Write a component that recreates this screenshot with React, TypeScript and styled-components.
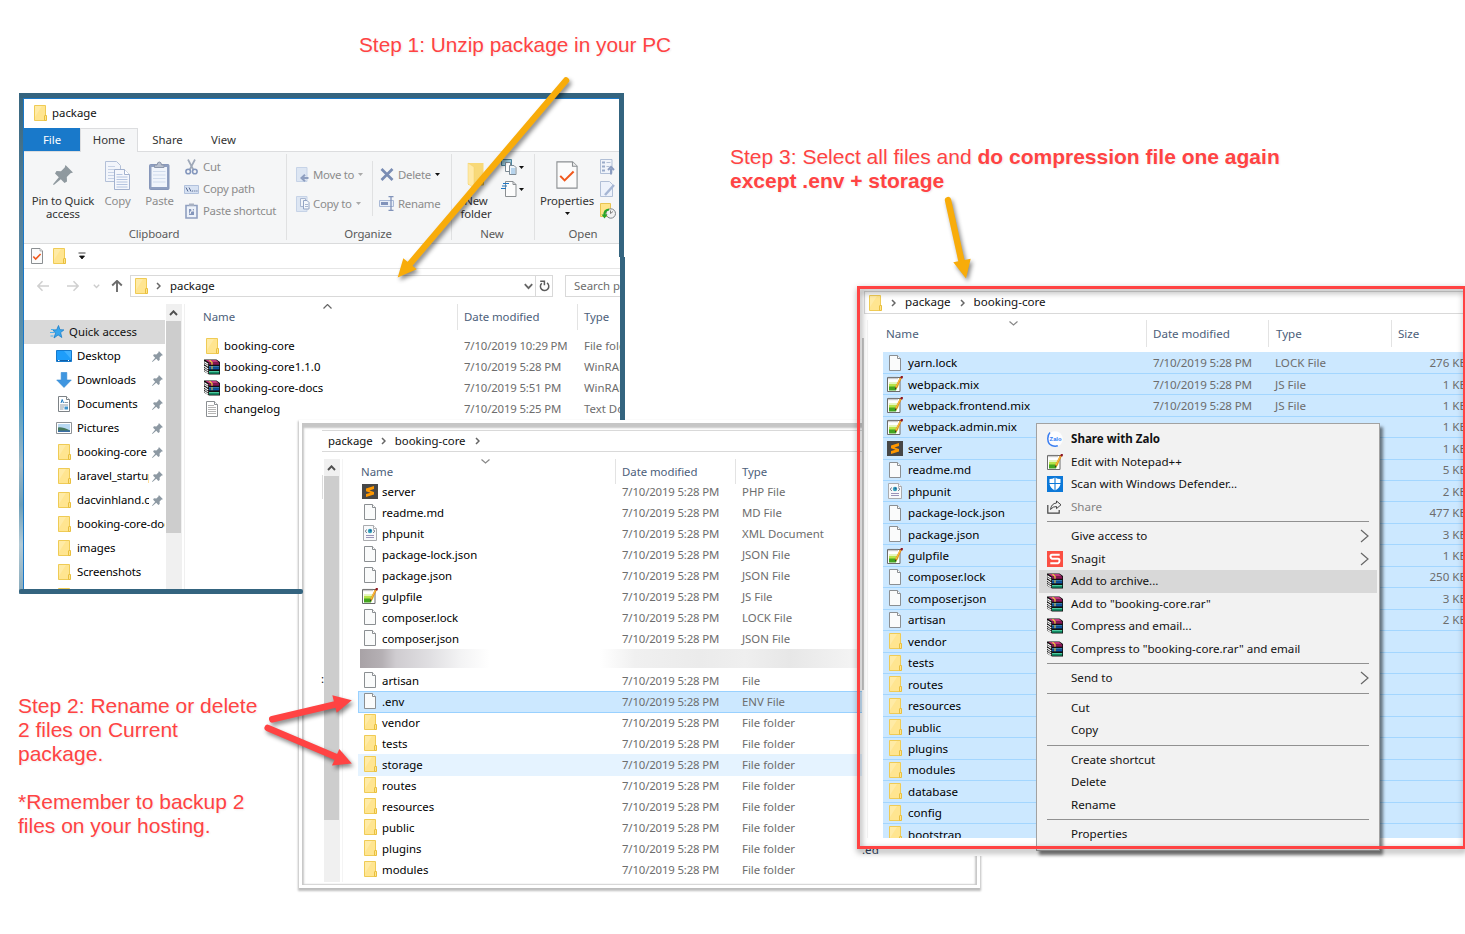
import React from "react";
import styled, { createGlobalStyle, css } from "styled-components";

const GlobalStyle = createGlobalStyle`
  * { box-sizing: border-box; }
  html, body { margin: 0; padding: 0; background: #fff; }
  body { overflow: hidden; }
  svg { display: block; flex: none; }
`;

const Desktop = styled.div`
  position: relative;
  width: 1465px;
  height: 934px;
  overflow: hidden;
  background: #fff;
  font-family: "Noto Sans", "Open Sans", sans-serif;
  font-size: 11.4px;
  color: #111;
  white-space: nowrap;
`;

/* ---------- annotations ---------- */

const Note = styled.div<{ $x: number; $y: number; $w: number; $size?: number }>`
  position: absolute;
  left: ${(p) => p.$x}px;
  top: ${(p) => p.$y}px;
  width: ${(p) => p.$w}px;
  font-family: "Liberation Sans", Arial, sans-serif;
  font-size: ${(p) => p.$size ?? 21}px;
  line-height: 24px;
  color: #ff4343;
  text-shadow: 1px 1px 2px rgba(0, 0, 0, 0.08);
  p { margin: 0 0 24px; }
`;

const ArrowLayer = styled.svg`
  position: absolute;
  left: 0;
  top: 0;
  pointer-events: none;
  filter: drop-shadow(2px 3px 2px rgba(0, 0, 0, 0.45));
`;

/* ---------- icons ---------- */

const Folder = () => (
  <svg width="14" height="16" viewBox="-1 0 14 16">
    <path d="M.5.5h11v15H.5z" fill="#ffe590" stroke="#efcb55" />
    <path d="M1 1h7L1 12z" fill="#ffefb5" opacity=".6" />
    <path d="M10.500 15.500v-4.500q0-.5.5-.5h1.500v5z" fill="#ffe58c" stroke="#e9bf3e" />
  </svg>
);

const Page = () => (
  <svg width="12" height="16" viewBox="0 0 12 16">
    <path d="M.5.5h8l3 3v12H.5z" fill="#fafbfb" stroke="#8b8f92" />
    <path d="M8.500.5v3h3" fill="#fff" stroke="#8b8f92" />
  </svg>
);

const TextPage = () => (
  <svg width="12" height="16" viewBox="0 0 12 16">
    <path d="M.5.5h8l3 3v12H.5z" fill="#fff" stroke="#8b8f92" />
    <path d="M2 4.500h6M2 6.500h8M2 8.500h8M2 10.500h8M2 12.500h8" stroke="#b5b5b5" />
    <path d="M8.500.5v3h3" fill="#fff" stroke="#8b8f92" />
  </svg>
);

const CheckPage = ({ w = 12, h = 16 }: { w?: number; h?: number }) => (
  <svg width={w} height={h} viewBox="0 0 12 16" preserveAspectRatio="none">
    <path d="M.5.5h8.500l2.500 2.500v12.500H.5z" fill="#fbfbfb" stroke="#8b8f92" strokeWidth={w > 15 ? 0.6 : 1} />
    <path d="M9 .5v2.500h2.500" fill="#eee" stroke="#8b8f92" strokeWidth=".6" />
    <path d="M2.300 8.500l2.400 2.600L9.600 6" fill="none" stroke="#f0581c" strokeWidth={w > 15 ? 1.1 : 1.6} />
  </svg>
);

const Xml = () => (
  <svg width="14" height="16" viewBox="0 0 14 16">
    <path d="M.5.5h10l3 3v12H.5z" fill="#f8f9fb" stroke="#a9abae" />
    <path d="M10.500.5v3h3" fill="#fff" stroke="#a9abae" />
    <path d="M4 4.500l-2 1.700 2 1.700M10 4.500l2 1.700-2 1.700" fill="none" stroke="#7c8290" />
    <circle cx="7" cy="6" r="2.200" fill="#3aa5bd" />
    <circle cx="7.500" cy="5.600" r="1" fill="#1f5f9a" />
    <path d="M3 10.500h8M3 12.500h8" stroke="#9a93b8" />
  </svg>
);

const Sublime = () => (
  <svg width="16" height="15" viewBox="0 0 16 15">
    <path d="M0 0h16v15H0z" fill="#474747" />
    <path d="M4 4.500L12 2v3L7.500 6.400 12 8v2.600L4 13v-2.900l4.500-1.400L4 7.200z" fill="#ff9800" />
  </svg>
);

const Notepad = () => (
  <svg width="16" height="16" viewBox="0 0 16 16">
    <path d="M.5 1.500h12.500v14H.5z" fill="#fff" stroke="#6b6b6b" />
    <path d="M2 7h9.500v3L9 14H2z" fill="#b7e34a" />
    <path d="M2 10.500h8l-1 4H2z" fill="#43a51f" />
    <path d="M2 6h9v2H2z" fill="#e6f6bd" />
    <path d="M2 .8v2.400M4 .8v2.400M6 .8v2.400M8 .8v2.400M10 .8v2.400" stroke="#8a8a8a" strokeWidth=".9" />
    <path d="M14 1.500L8.800 12" stroke="#e48a17" strokeWidth="2" />
    <path d="M13.400 2.300L9 11" stroke="#ffd34d" strokeWidth=".8" />
    <path d="M15.300 0l-1.200 2.200" stroke="#8c1822" strokeWidth="2.400" />
    <path d="M8.800 11.500l-.5 1.700" stroke="#333" strokeWidth="1" />
  </svg>
);

const Rar = () => (
  <svg width="16" height="16" viewBox="0 0 16 16">
    <path d="M0 .5h12.500L16 3v12.500H5L0 12.500z" fill="#101010" />
    <path d="M1.500 1h10.700L15 3.500H5z" fill="#c2387c" />
    <path d="M5 3.500h10.200V5.700H5z" fill="#8a1456" />
    <path d="M5 7.200h10.200v1.200H5z" fill="#3f95d6" />
    <path d="M5 8.400h10.200v2H5z" fill="#0d55a6" />
    <path d="M5 12h10.200v1H5z" fill="#4fcaa0" />
    <path d="M5 13h10.200v1.700H5z" fill="#138e66" />
    <path d="M.3 2.800L4.200 5.300M.3 4.600l3.900 2.600M.3 7.200l3.900 2.800M.3 9.400l3.900 2.700M.3 11.500l3.900 2.800" stroke="#fff" strokeWidth="1.100" />
    <path d="M5.500 1.200L8 3.400v2.300" fill="none" stroke="#f2d33c" strokeWidth="1.200" />
    <path d="M8 7.200v3" stroke="#f2d33c" strokeWidth="1" />
  </svg>
);

const PinShape = ({ size = 11, color = "#8d99a3" }: { size?: number; color?: string }) => (
  <svg width={size} height={size} viewBox="0 0 20 20">
    <path d="M12.500 0L20 7.500l-2.500.8-3.700 3.700.2 4.500L11.500 18 7.800 14.200.8 20 0 19.200l5.800-7L2 8.500 3.500 6l4.500.2 3.700-3.700z" fill={color} />
  </svg>
);

const Star = () => (
  <svg width="14" height="14" viewBox="0 0 14 14">
    <path d="M8.500.5l1.400 4.200 4 .2-3.300 2.700 1.200 4.900-3.700-2.600L4 13l1.500-4.700L3 5l3.700-.2z" fill="#38a6ec" stroke="#1d7fc9" strokeWidth=".8" />
    <path d="M1 4.500h3M0 7.500h4M.5 11h3" stroke="#4ab0ee" strokeWidth="1" />
  </svg>
);

const Monitor = () => (
  <svg width="16" height="12" viewBox="0 0 16 12">
    <path d="M.5.5h15v11H.5z" fill="#1e9dfa" stroke="#1579cc" />
    <path d="M8 1h7v8z" fill="#3fb0ff" />
    <path d="M1 10.500h14" stroke="#0f5fa8" />
    <path d="M2 10.500h1.500M12 10.500h1" stroke="#fff" />
  </svg>
);

const DownArrow = () => (
  <svg width="16" height="16" viewBox="0 0 16 16">
    <path d="M5.200.5h5.600V8h4.500L8 15.500.7 8h4.500z" fill="#3f96e0" stroke="#2f86d1" strokeWidth=".6" />
  </svg>
);

const DocIcon = () => (
  <svg width="12" height="16" viewBox="0 0 12 16">
    <path d="M.5.5h8l3 3v12H.5z" fill="#fff" stroke="#7d8286" />
    <path d="M8.500.5v3h3" fill="#fff" stroke="#7d8286" />
    <path d="M3 7l1.200-3.500L5.500 7" fill="none" stroke="#1c7bc4" />
    <path d="M6.500 6.500H10M2 9h8M2 13h3.500" stroke="#8c9aa6" />
    <path d="M2 11h4" stroke="#8c9aa6" />
    <path d="M6.500 10.500H10v3H6.500z" fill="#3d93cc" />
  </svg>
);

const PictureIcon = () => (
  <svg width="16" height="12" viewBox="0 0 16 12">
    <path d="M.5.5h15v11H.5z" fill="#fff" stroke="#8e9296" />
    <path d="M2 2h12v8H2z" fill="#b9d9f2" />
    <path d="M2 5.500q4-1 12 3V10H2z" fill="#47795c" />
    <path d="M2 8.500h12V10H2z" fill="#3a6ea5" />
  </svg>
);

const Chevron = ({ d, w, h, c = "#6a6a6a", s = 1.200 }: { d: string; w: number; h: number; c?: string; s?: number }) => (
  <svg width={w} height={h} viewBox={`0 0 ${w} ${h}`}>
    <path d={d} fill="none" stroke={c} strokeWidth={s} />
  </svg>
);

const Crumb = () => <Chevron w={5} h={8} d="M1 1l3 3-3 3" c="#666" s={1.500} />;
const SortDown = () => <Chevron w={9} h={5} d="M.5.5l4 3.500 4-3.500" c="#888" />;
const SortUp = () => <Chevron w={9} h={5} d="M.5 4.500l4-4 4 4" c="#666" />;
const ScrollUp = () => <Chevron w={9} h={6} d="M1 5l3.500-3.700L8 5" c="#505050" s={1.900} />;

const Caret = ({ c = "#111" }: { c?: string }) => (
  <svg width="5" height="3" viewBox="0 0 5 3"><path d="M0 0h5L2.500 3z" fill={c} /></svg>
);

const CopyBig = () => (
  <svg width="25" height="29" viewBox="0 0 25 29">
    <path d="M.5.5h11l4 4v16H.5z" fill="#f2f5fb" stroke="#b3c0d8" />
    <path d="M3 5.500h7M3 8.500h10M3 11.500h10M3 14.500h10M3 17.500h10" stroke="#c7d2e6" />
    <path d="M9.500 8.500h10l5 5v15h-15z" fill="#f5f7fc" stroke="#a3b2cf" />
    <path d="M19.500 8.500v5h5" fill="#fff" stroke="#a3b2cf" />
    <path d="M11.500 13.500h6M11.500 16h11M11.500 18.500h11M11.500 21h11M11.500 23.500h11M11.500 26h11" stroke="#b4c4e0" />
  </svg>
);

const PasteBig = () => (
  <svg width="21" height="29" viewBox="0 0 21 29">
    <rect x=".5" y="3.500" width="19.500" height="25" rx="1" fill="#8f9fc0" stroke="#8797ba" />
    <path d="M2.500 6h15.500v20H2.500z" fill="#f0f4fb" />
    <path d="M4 10.500h12.500M4 14h12.500M4 17.500h12.500M4 21h12.500" stroke="#d0dbec" />
    <path d="M5.500 6.500V4H8q.3-3 2.300-3t2.300 3H15v2.500z" fill="#b7bfce" stroke="#8d97ac" />
  </svg>
);

const Scissors = () => (
  <svg width="13" height="16" viewBox="0 0 13 16">
    <path d="M3 .5L8.500 11M10 .5L4.500 11" stroke="#9fa9b9" strokeWidth="1.700" />
    <circle cx="3.200" cy="12.500" r="2.300" fill="none" stroke="#8497bd" strokeWidth="1.600" />
    <circle cx="9.800" cy="12.500" r="2.300" fill="none" stroke="#8497bd" strokeWidth="1.600" />
  </svg>
);

const PathIcon = () => (
  <svg width="15" height="9" viewBox="0 0 15 9">
    <path d="M.5.5h14v8H.5z" fill="#d7e2f3" stroke="#b1c1dc" />
    <path d="M2 2.500l2 4M5 2.500l2 4" stroke="#586b93" />
    <path d="M8 6h1.200M10.200 6h1.200M12.300 6h1.200" stroke="#586b93" />
  </svg>
);

const PasteShortcut = () => (
  <svg width="13" height="16" viewBox="0 0 13 16">
    <path d="M1 2.500h11v12.500H1z" fill="#edf2fa" stroke="#8f9fc0" strokeWidth="1.600" />
    <path d="M4 .5h5v2.500H4z" fill="#a8b1c2" />
    <path d="M4 6h5v6H4z" fill="#8496bb" />
    <path d="M5 11q0-3 2.500-3.500M6 6.800h2v2" fill="none" stroke="#fff" />
  </svg>
);

const MoveIcon = () => (
  <svg width="13" height="15" viewBox="0 0 13 15">
    <path d="M.5.5H11v14H.5z" fill="#dde6f3" stroke="#c6d3e7" />
    <path d="M12.500 11H7M9 7.800L5.500 11 9 14.200" fill="none" stroke="#8f9fc0" strokeWidth="2" />
  </svg>
);

const CopyToIcon = () => (
  <svg width="14" height="16" viewBox="0 0 14 16">
    <path d="M.5.5H11v15H.5z" fill="#dde6f3" stroke="#c6d3e7" />
    <path d="M4.500 2.500h5v8h-5z" fill="#f2f5fa" stroke="#a9b7d1" />
    <path d="M7.500 4.500h3.500l2 2v6.500H7.500z" fill="#f5f8fc" stroke="#93a4c4" />
    <path d="M9 8.500h3M9 10.500h3" stroke="#a9b7d1" />
  </svg>
);

const DeleteIcon = () => (
  <svg width="14" height="13" viewBox="0 0 14 13">
    <path d="M1.500 1l11 11M12.500 1l-11 11" stroke="#7a8db4" strokeWidth="2.700" />
  </svg>
);

const RenameIcon = () => (
  <svg width="16" height="15" viewBox="0 0 16 15">
    <path d="M.5 4.500h14v6H.5z" fill="#e9eff8" stroke="#a9b9d6" />
    <path d="M2 6h7v3H2z" fill="#8193ba" />
    <path d="M12 1v13M9.500.7h5M9.500 14.300h5" stroke="#8193ba" strokeWidth="1.300" />
  </svg>
);

const NewFolderIcon = () => (
  <svg width="18" height="27" viewBox="0 0 18 27">
    <path d="M1 1h15.500v22H1z" fill="#f8d978" />
    <path d="M1 1l6 4v21l-6-4z" fill="#ffe9a6" stroke="#f3d06a" strokeWidth=".5" />
    <path d="M16.500 14v9H14" fill="none" stroke="#e9bf3e" />
  </svg>
);

const NewItemIcon = () => (
  <svg width="16" height="16" viewBox="0 0 16 16">
    <path d="M.5.5h10v6H.5z" fill="#9ed0e4" stroke="#4d86a0" />
    <path d="M4.500 3.500h5v9h-5z" fill="#fff" stroke="#7d8a94" />
    <path d="M8.500 6.500h4.500l2 2v7H8.500z" fill="#eef5fb" stroke="#7d8a94" />
    <path d="M10 10h4M10 12h4M10 14h4" stroke="#7fb1dd" />
  </svg>
);

const EasyAccess = () => (
  <svg width="16" height="16" viewBox="0 0 16 16">
    <path d="M4.500.5H12l3 3v12H4.500z" fill="#fcfcfc" stroke="#8b8f92" />
    <path d="M12 .5v3h3" fill="none" stroke="#8b8f92" />
    <path d="M2 2.500h6M1 5h5M0 7.500h5" stroke="#1f76c2" strokeWidth="1.200" />
  </svg>
);

const OpenIcon = () => (
  <svg width="15" height="16" viewBox="0 0 15 16">
    <path d="M.5.5h11.500v14H.5z" fill="#f0f4fa" stroke="#b1bfd6" />
    <path d="M2 2.500h3v2H2zM2 6.500h3v2H2zM2 10.500h3v2H2z" fill="#9aabc9" />
    <path d="M6.500 3.500h4M6.500 7.500h3" stroke="#b1bfd6" />
    <path d="M11 15.500V10M8 11l3-3 3 3" fill="none" stroke="#8b9cc0" strokeWidth="2" />
  </svg>
);

const EditIcon = () => (
  <svg width="15" height="16" viewBox="0 0 15 16">
    <path d="M.5.5h9l3 3v12H.5z" fill="#edf2fb" stroke="#b1bfd6" />
    <path d="M14 4L5 14" stroke="#a6b6d4" strokeWidth="2.500" />
  </svg>
);

const HistoryIcon = () => (
  <svg width="16" height="16" viewBox="0 0 16 16">
    <path d="M.5.5h10v13H.5z" fill="#ffe48a" stroke="#e8c451" />
    <circle cx="10.800" cy="10.500" r="4.700" fill="#f1f1f1" stroke="#7d8388" />
    <path d="M10.500 7.500v3l2.500-2" fill="none" stroke="#666" strokeWidth=".8" />
    <path d="M9 6.500q-5 .5-4.500 6" fill="none" stroke="#28a52b" strokeWidth="2.200" />
    <path d="M1.500 11.500h6l-3 4z" fill="#28a52b" />
  </svg>
);

const Refresh = () => (
  <svg width="11" height="12" viewBox="0 0 11 12">
    <path d="M2.800 3.200A4.200 4.200 0 1 0 8 2.900" fill="none" stroke="#5c5c5c" strokeWidth="1.500" />
    <path d="M1.200 1.200h4.200v4" fill="none" stroke="#5c5c5c" strokeWidth="1.500" />
  </svg>
);

const NavArrow = ({ flip, c, up }: { flip?: boolean; c: string; up?: boolean }) => (
  <svg width="12" height="12" viewBox="0 0 12 12">
    <path
      transform={up ? "rotate(90 6 6)" : flip ? "rotate(180 6 6)" : undefined}
      d="M12 6H1M5.500 1.200L.9 6l4.600 4.800"
      fill="none" stroke={c} strokeWidth={up ? 1.900 : 1.500}
    />
  </svg>
);

const Zalo = () => (
  <svg width="16" height="16" viewBox="0 0 16 16">
    <circle cx="8" cy="8" r="7.800" fill="#fdfdff" />
    <path d="M3 1.500Q.6 4 .8 8q.2 5 4 6.500 3 1.200 6 .3" fill="none" stroke="#3a7ef0" strokeWidth="1.500" />
    <text x="2.600" y="9.800" fontFamily="Liberation Sans" fontWeight="bold" fontSize="5.800" fill="#2f7bf5">Zalo</text>
  </svg>
);

const Defender = () => (
  <svg width="16" height="16" viewBox="0 0 16 16">
    <path d="M0 0h16v16H0z" fill="#0c78d8" />
    <path d="M8 1.500q2.500 1.500 5.500 1.500v5q-.8 4-5.500 6.500Q3.300 12 2.500 8V3Q5.500 3 8 1.500z" fill="#fff" />
    <path d="M8 1v14M2 7.500h12" stroke="#0c78d8" strokeWidth="1.100" />
  </svg>
);

const ShareIcon = () => (
  <svg width="15" height="14" viewBox="0 0 15 14">
    <path d="M.8 5v8.200h11.400V10" fill="none" stroke="#444" strokeWidth="1.200" />
    <path d="M9.500 1l4.500 3.800-4.500 3.800V6.500Q6 6.300 3.500 9.500 4.300 3.500 9.500 3z" fill="none" stroke="#444" />
  </svg>
);

const Snagit = () => (
  <svg width="16" height="16" viewBox="0 0 16 16">
    <path d="M0 0h16v16H0z" fill="#fb4f43" />
    <path d="M12.700 3.800H5Q3.500 3.800 3.500 5.500T5 7.800h6q1.500 0 1.500 2t-1.500 2.400H3.300" fill="none" stroke="#fff" strokeWidth="2" />
  </svg>
);

/* ---------- shared explorer parts ---------- */

const IconSlot = styled.span<{ $w: number }>`
  display: flex;
  flex: none;
  justify-content: center;
  align-items: center;
  width: ${(p) => p.$w}px;
`;

/* Text that sits one pixel above the middle of its icon */
const Raised = styled.span`
  flex: none;
  margin-top: -2px;
`;

const ScrollBar = styled.div`
  display: flex;
  flex-direction: column;
  flex: none;
  width: 16px;
  background: #f0f0f0;
`;

const ScrollButton = styled.div`
  display: flex;
  justify-content: center;
  align-items: center;
  width: 15px;
  height: 17px;
`;

const ScrollThumb = styled.div<{ $h: number }>`
  height: ${(p) => p.$h}px;
  width: 15px;
  background: #cdcdcd;
`;

const HeaderRow = styled.div<{ $h: number }>`
  display: flex;
  position: relative;
  height: ${(p) => p.$h}px;
  line-height: ${(p) => p.$h}px;
  color: #4c607a;
`;

const HeaderCell = styled.div<{ $w: number; $pad: number; $line?: boolean }>`
  flex: none;
  width: ${(p) => p.$w}px;
  padding-left: ${(p) => p.$pad}px;
  ${(p) => p.$line && css`border-left: 1px solid #e3e3e3; letter-spacing: -0.04px;`}
`;

const SortMark = styled.div<{ $x: number; $y: number }>`
  position: absolute;
  left: ${(p) => p.$x}px;
  top: ${(p) => p.$y}px;
`;

const Cell = styled.span<{ $w?: number; $kind?: "name" | "date" | "type" | "size" }>`
  flex: none;
  width: ${(p) => (p.$w ? `${p.$w}px` : "auto")};
  color: ${(p) => (p.$kind ? "#6d6d6d" : "#000")};
  letter-spacing: ${(p) => (p.$kind === "date" ? "-0.16px" : "0")};
  text-align: ${(p) => (p.$kind === "size" ? "right" : "left")};
`;

/* ---------- window 1 ---------- */

const PackageWindow = styled.section`
  position: absolute;
  left: 19px;
  top: 93px;
  width: 601px;
  height: 501px;
  display: flex;
  flex-direction: column;
  background: #fff;
  border-top: 5px solid #34647f;
  overflow: hidden;
`;

const WindowMiddle = styled.div`
  display: flex;
  flex: 1;
  min-height: 0;
`;

const Wallpaper = styled.div`
  flex: none;
  width: 5px;
  border-right: 1px solid #1a78c8;
  background: linear-gradient(#39677f 0, #55809a 24%, #5b91ad 48%, #4f9cc0 60%, #9fb9c6 74%, #6fa0b8 82%, #b4cbd6 90%, #86a9ba 100%);
`;

const WindowBody = styled.div`
  display: flex;
  flex-direction: column;
  flex: 1;
  min-width: 0;
  border-top: 1px solid #1a78c8;
`;

const TitleBar = styled.header`
  display: flex;
  align-items: center;
  gap: 5px;
  height: 29px;
  padding: 0 0 2px 9px;
`;

const TabStrip = styled.nav`
  display: flex;
  height: 24px;
  line-height: 23px;
  text-align: center;
  border-bottom: 1px solid #dcdddf;
`;

const Tab = styled.div<{ $w: number; $kind?: "file" | "active" }>`
  width: ${(p) => p.$w}px;
  height: 24px;
  color: #333;
  ${(p) => p.$kind === "file" && css`background: #1979ca; color: #fff; height: 23px;`}
  ${(p) => p.$kind === "active" && css`
    background: #f5f6f7;
    border: 1px solid #dcdddf;
    border-bottom: none;
    line-height: 22px;
  `}
`;

const Ribbon = styled.div`
  display: flex;
  flex: none;
  height: 92px;
  background: #f5f6f7;
  border-bottom: 1px solid #dadbdc;
  letter-spacing: -0.13px;
`;

const RibbonGroup = styled.div<{ $w: number }>`
  display: flex;
  flex-direction: column;
  flex: none;
  position: relative;
  width: ${(p) => p.$w}px;
  &:not(:last-child)::after {
    content: "";
    position: absolute;
    right: 0;
    top: 2px;
    height: 86px;
    border-right: 1px solid #e0e1e2;
  }
`;

const GroupBody = styled.div`
  display: flex;
  height: 75px;
`;

const GroupLabel = styled.div`
  padding-right: 3px;
  text-align: center;
  line-height: 14px;
  color: #5a5a5a;
`;

const BigButton = styled.div<{ $w: number; $ml?: number; $off?: boolean }>`
  display: flex;
  flex-direction: column;
  flex: none;
  align-items: center;
  width: ${(p) => p.$w}px;
  margin-left: ${(p) => p.$ml ?? 0}px;
  padding-top: 8px;
  line-height: 13px;
  text-align: center;
  color: ${(p) => (p.$off ? "#8c8c8c" : "#333")};
`;

const BigIcon = styled.div`
  display: flex;
  align-items: center;
  height: 30px;
  margin-bottom: 4px;
`;

const SmallColumn = styled.div<{ $w: number; $top: number; $left: number; $line?: boolean }>`
  flex: none;
  width: ${(p) => p.$w}px;
  padding-top: ${(p) => p.$top}px;
  padding-left: ${(p) => p.$left}px;
  position: relative;
  ${(p) => p.$line && css`
    &::after {
      content: "";
      position: absolute;
      right: 0;
      top: 9px;
      height: 55px;
      border-right: 1px solid #e0e1e2;
    }
  `}
`;

const SmallItem = styled.div<{ $h?: number; $gap?: number }>`
  display: flex;
  align-items: center;
  gap: ${(p) => p.$gap ?? 4}px;
  height: ${(p) => p.$h ?? 22}px;
  color: #8c8c8c;
  letter-spacing: -0.28px;
`;

const QuickBar = styled.div`
  display: flex;
  align-items: center;
  gap: 9px;
  flex: none;
  height: 25px;
  padding-left: 7px;
  border-bottom: 1px solid #e6e6e6;
  > :last-child { margin-left: 3px; }
`;

const AddressRow = styled.div`
  display: flex;
  align-items: center;
  flex: none;
  height: 35px;
  padding-bottom: 1px;
`;

const NavButtons = styled.div`
  display: flex;
  flex: none;
  align-items: center;
  width: 106px;
  padding-left: 13px;
  > :nth-child(2) { margin-left: 18px; }
  > :nth-child(3) { margin-left: 14px; }
  > :nth-child(4) { margin-left: 11px; }
`;

const AddressBox = styled.div`
  display: flex;
  flex: none;
  align-items: center;
  width: 423px;
  height: 22px;
  padding-left: 3px;
  border: 1px solid #d9d9d9;
  gap: 8px;
  > span { margin-left: 1px; }
`;

const AddressTail = styled.div`
  display: flex;
  flex: 1;
  height: 20px;
  align-items: center;
  justify-content: flex-end;
`;

const RefreshBox = styled.div`
  display: flex;
  align-items: center;
  justify-content: center;
  width: 17px;
  height: 20px;
  margin-left: 2px;
  border-left: 1px solid #d9d9d9;
`;

const SearchBox = styled.div`
  flex: none;
  width: 100px;
  height: 22px;
  margin-left: 12px;
  padding-left: 8px;
  line-height: 19px;
  border: 1px solid #d9d9d9;
  color: #6d6d6d;
`;

const Panes = styled.div`
  display: flex;
  flex: 1;
  min-height: 0;
`;

const NavPane = styled.div`
  width: 142px;
  padding-top: 16px;
  overflow: hidden;
`;

const NavItem = styled.div<{ $root?: boolean }>`
  display: flex;
  align-items: center;
  position: relative;
  height: 24px;
  padding-left: ${(p) => (p.$root ? 26 : 32)}px;
  gap: 5px;
  ${(p) => p.$root && css`background: #d9d9d9; width: 141px;`}
`;

const NavLabel = styled.span<{ $clip?: boolean }>`
  flex: none;
  margin-top: -2px;
  color: #000;
  letter-spacing: -0.08px;
  width: ${(p) => (p.$clip ? "72px" : "88px")};
  overflow: hidden;
`;

const NavPin = styled.span`
  margin-left: -2px;
`;

const FilePane = styled.div`
  flex: 1;
  min-width: 0;
  margin-left: 2px;
  border-left: 1px solid #f0f0f0;
`;

const PackageRows = styled.div`
  padding-top: 6px;
`;

const PackageFile = styled.div`
  display: flex;
  align-items: center;
  height: 21px;
  padding: 0 0 2px 19px;
  gap: 4px;
`;

const BottomBar = styled.div`
  position: absolute;
  left: 19px;
  top: 589px;
  width: 284px;
  height: 5px;
  border-radius: 2px;
  background: #34647f;
`;

const SideBar = styled.div<{ $x: number; $y: number; $h: number }>`
  position: absolute;
  left: ${(p) => p.$x}px;
  top: ${(p) => p.$y}px;
  width: 5px;
  height: ${(p) => p.$h}px;
  background: #34647f;
`;

/* ---------- window 2 ---------- */

const CoreWindow = styled.section`
  position: absolute;
  left: 299px;
  top: 420px;
  width: 681px;
  height: 468px;
  background: #fff;
  border: 3px solid #fff;
  box-shadow: 0 2px 2px 1px rgba(0, 0, 0, 0.26);
  display: flex;
`;

const CoreInner = styled.div`
  flex: 1;
  display: flex;
  flex-direction: column;
  min-width: 0;
  overflow: hidden;
  padding: 7px 0 3px 20px;
  box-shadow: inset 0 5px 2px #c6c6c6, inset 2px 0 2px #c9c9c9, inset -2px 0 2px #c9c9c9, inset 0 -1px 1px #e2e2e2;
`;

const CoreAddress = styled.div`
  display: flex;
  align-items: center;
  flex: none;
  gap: 9px;
  height: 22px;
  padding-left: 6px;
  border-top: 1px solid #d9d9d9;
  border-bottom: 1px solid #d9d9d9;
  margin-right: 6px;
  > svg:nth-child(2) { margin-left: -1px; }
`;

const CoreBody = styled.div`
  display: flex;
  flex: 1;
  min-height: 0;
  padding-top: 7px;
`;

const CoreGutter = styled.div`
  width: 2px;
  height: 24px;
  margin-top: 16px;
  border-left: 1px solid #dcdcdc;
`;

const CoreList = styled.div`
  position: relative;
  flex: 1;
  margin-left: 2px;
  border-left: 1px solid #f4f4f4;
`;

const CoreRows = styled.div`
  margin: -3px 0 0 15px;
`;

const CoreRow = styled.div<{ $state?: "selected" | "hover" }>`
  display: flex;
  align-items: center;
  position: relative;
  height: 22px;
  margin-bottom: -1px;
  padding: 0 0 2px 3px;
  border: 1px solid transparent;
  ${(p) => p.$state === "selected" && css`background: #cce8ff; border-color: #99d1ff;`}
  ${(p) => p.$state === "hover" && css`background: #e5f3ff;`}
  > :nth-child(2) { margin-left: 4px; }
`;

const SmearRow = styled.div`
  height: 19px;
  margin: 0 0 2px 2px;
  width: 500px;
  background: linear-gradient(90deg, #a8a2a6 0, #b5b0b4 22px, #cfccd0 36px, #e0dfe2 70px, #f3f3f4 100px, #fff 130px, #fff 240px, #f0f0f0 275px, #ebebeb 340px, #efefef 385px, #e7e7e7 430px, #f3f3f3 490px);
`;

const StrayColon = styled.span`
  position: absolute;
  left: 321px;
  top: 671px;
`;

/* ---------- window 3 ---------- */

const ArchiveWindow = styled.section`
  position: absolute;
  left: 862px;
  top: 289px;
  width: 603px;
  height: 567px;
  background: #fff;
  overflow: hidden;
  font-size: 11.6px;
  display: flex;
  flex-direction: column;
`;

const ArchiveAddress = styled.div`
  display: flex;
  align-items: center;
  flex: none;
  gap: 9px;
  height: 23px;
  margin: 2px 0 0 2px;
  padding-left: 3px;
  border: 1px solid #d9d9d9;
  border-right: none;
`;

const ArchiveBody = styled.div`
  display: flex;
  height: 524px;
  overflow: hidden;
  padding-top: 6px;
`;

const ArchiveEdge = styled.div`
  flex: none;
  width: 2px;
  margin-top: 18px;
  height: 352px;
  background: #c9c9c9;
`;

const ArchiveList = styled.div`
  position: relative;
  flex: 1;
  margin-left: 3px;
  border-left: 1px solid #f2f2f2;
`;

const ArchiveRows = styled.div`
  margin: 5.4px 0 0 15px;
`;

const ArchiveRow = styled.div`
  display: flex;
  align-items: center;
  height: 21.45px;
  padding-left: 4px;
  background: #cce8ff;
  border-bottom: 1px solid #a3d6ff;
  > :nth-child(2) { margin-left: 5px; }
`;

const Leftover = styled.span`
  position: absolute;
  left: 862px;
  top: 842px;
  font-size: 11.65px;
  color: #2e3f5c;
`;

const RedFrame = styled.div`
  position: absolute;
  left: 857px;
  top: 286px;
  width: 608px;
  height: 563px;
  border: 3px solid #ff4343;
  border-right-width: 2px;
  pointer-events: none;
  filter: drop-shadow(1px 3px 3px rgba(0, 0, 0, 0.5));
`;

/* ---------- context menu ---------- */

const Menu = styled.div`
  position: absolute;
  left: 1036px;
  top: 423px;
  width: 344px;
  height: 428px;
  padding: 4px 2px;
  border: 1px solid #a2a2a2;
  background: #f2f2f2;
  box-shadow: 3px 4px 3px rgba(0, 0, 0, 0.5);
  font-size: 11.6px;
`;

const MenuItem = styled.div<{ $active?: boolean; $bold?: boolean; $off?: boolean }>`
  display: flex;
  align-items: center;
  height: 22.5px;
  padding: 0 8px 0 7px;
  font-weight: ${(p) => (p.$bold ? 700 : 400)};
  color: ${(p) => (p.$off ? "#848484" : "#111")};
  background: ${(p) => (p.$active ? "#d8d8d8" : "transparent")};
  > span:nth-child(2) { flex: 1; margin: -1px 0 0 8px; }
`;

const MenuLine = styled.div`
  height: 1px;
  margin: 3px 8px;
  background: #919191;
`;

/* ---------- data ---------- */

const navItems: { label: string; icon: React.ReactNode; pin?: boolean }[] = [
  { label: "Desktop", icon: <Monitor />, pin: true },
  { label: "Downloads", icon: <DownArrow />, pin: true },
  { label: "Documents", icon: <DocIcon />, pin: true },
  { label: "Pictures", icon: <PictureIcon />, pin: true },
  { label: "booking-core", icon: <Folder />, pin: true },
  { label: "laravel_startup", icon: <Folder />, pin: true },
  { label: "dacvinhland.com", icon: <Folder />, pin: true },
  { label: "booking-core-docs", icon: <Folder /> },
  { label: "images", icon: <Folder /> },
  { label: "Screenshots", icon: <Folder /> },
];

const packageFiles: [React.ReactNode, string, string, string][] = [
  [<Folder />, "booking-core", "7/10/2019 10:29 PM", "File folder"],
  [<Rar />, "booking-core1.1.0", "7/10/2019 5:28 PM", "WinRAR"],
  [<Rar />, "booking-core-docs", "7/10/2019 5:51 PM", "WinRAR"],
  [<TextPage />, "changelog", "7/10/2019 5:25 PM", "Text Doc"],
];

type CoreFile = { icon: React.ReactNode; name: string; type: string; state?: "selected" | "hover" };
const folder = (name: string, state?: "hover"): CoreFile => ({ icon: <Folder />, name, type: "File folder", state });
const coreFiles: (CoreFile | null)[] = [
  { icon: <Sublime />, name: "server", type: "PHP File" },
  { icon: <Page />, name: "readme.md", type: "MD File" },
  { icon: <Xml />, name: "phpunit", type: "XML Document" },
  { icon: <Page />, name: "package-lock.json", type: "JSON File" },
  { icon: <Page />, name: "package.json", type: "JSON File" },
  { icon: <Notepad />, name: "gulpfile", type: "JS File" },
  { icon: <Page />, name: "composer.lock", type: "LOCK File" },
  { icon: <Page />, name: "composer.json", type: "JSON File" },
  null,
  { icon: <Page />, name: "artisan", type: "File" },
  { icon: <Page />, name: ".env", type: "ENV File", state: "selected" },
  folder("vendor"),
  folder("tests"),
  folder("storage", "hover"),
  folder("routes"),
  folder("resources"),
  folder("public"),
  folder("plugins"),
  folder("modules"),
];

const archiveFiles: [React.ReactNode, string, string, string, string][] = [
  [<Page />, "yarn.lock", "7/10/2019 5:28 PM", "LOCK File", "276 KB"],
  [<Notepad />, "webpack.mix", "7/10/2019 5:28 PM", "JS File", "1 KB"],
  [<Notepad />, "webpack.frontend.mix", "7/10/2019 5:28 PM", "JS File", "1 KB"],
  [<Notepad />, "webpack.admin.mix", "", "", "1 KB"],
  [<Sublime />, "server", "", "", "1 KB"],
  [<Page />, "readme.md", "", "", "5 KB"],
  [<Xml />, "phpunit", "", "", "2 KB"],
  [<Page />, "package-lock.json", "", "", "477 KB"],
  [<Page />, "package.json", "", "", "3 KB"],
  [<Notepad />, "gulpfile", "", "", "1 KB"],
  [<Page />, "composer.lock", "", "", "250 KB"],
  [<Page />, "composer.json", "", "", "3 KB"],
  [<Page />, "artisan", "", "", "2 KB"],
  ...["vendor", "tests", "routes", "resources", "public", "plugins", "modules", "database", "config", "bootstrap"].map(
    (n) => [<Folder />, n, "", "", ""] as [React.ReactNode, string, string, string, string]
  ),
];

type Entry = { label: string; icon?: React.ReactNode; sub?: boolean; active?: boolean; bold?: boolean; off?: boolean } | "line";
const menuEntries: Entry[] = [
  { label: "Share with Zalo", icon: <Zalo />, bold: true },
  { label: "Edit with Notepad++", icon: <Notepad /> },
  { label: "Scan with Windows Defender...", icon: <Defender /> },
  { label: "Share", icon: <ShareIcon />, off: true },
  "line",
  { label: "Give access to", sub: true },
  { label: "Snagit", icon: <Snagit />, sub: true },
  { label: "Add to archive...", icon: <Rar />, active: true },
  { label: 'Add to "booking-core.rar"', icon: <Rar /> },
  { label: "Compress and email...", icon: <Rar /> },
  { label: 'Compress to "booking-core.rar" and email', icon: <Rar /> },
  "line",
  { label: "Send to", sub: true },
  "line",
  { label: "Cut" },
  { label: "Copy" },
  "line",
  { label: "Create shortcut" },
  { label: "Delete" },
  { label: "Rename" },
  "line",
  { label: "Properties" },
];

/* ---------- views ---------- */

const RibbonView = () => (
  <Ribbon>
    <RibbonGroup $w={263}>
      <GroupBody>
        <BigButton $w={68} $ml={5}>
          <BigIcon><PinShape size={20} color="#8f999f" /></BigIcon>
          Pin to Quick<br />access
        </BigButton>
        <BigButton $w={41} $off><BigIcon><CopyBig /></BigIcon>Copy</BigButton>
        <BigButton $w={43} $off><BigIcon><PasteBig /></BigIcon>Paste</BigButton>
        <SmallColumn $w={100} $top={4} $left={3}>
          <SmallItem><IconSlot $w={15}><Scissors /></IconSlot><Raised>Cut</Raised></SmallItem>
          <SmallItem><IconSlot $w={15}><PathIcon /></IconSlot><Raised>Copy path</Raised></SmallItem>
          <SmallItem><IconSlot $w={15}><PasteShortcut /></IconSlot><Raised>Paste shortcut</Raised></SmallItem>
        </SmallColumn>
      </GroupBody>
      <GroupLabel>Clipboard</GroupLabel>
    </RibbonGroup>
    <RibbonGroup $w={165}>
      <GroupBody>
        <SmallColumn $w={86} $top={8} $left={9} $line>
          <SmallItem $h={29}><IconSlot $w={13}><MoveIcon /></IconSlot>Move to<Caret c="#aaa" /></SmallItem>
          <SmallItem $h={29}><IconSlot $w={13}><CopyToIcon /></IconSlot>Copy to<Caret c="#aaa" /></SmallItem>
        </SmallColumn>
        <SmallColumn $w={79} $top={8} $left={6}>
          <SmallItem $h={29}><IconSlot $w={15}><DeleteIcon /></IconSlot>Delete<Caret /></SmallItem>
          <SmallItem $h={29}><IconSlot $w={15}><RenameIcon /></IconSlot>Rename</SmallItem>
        </SmallColumn>
      </GroupBody>
      <GroupLabel>Organize</GroupLabel>
    </RibbonGroup>
    <RibbonGroup $w={83}>
      <GroupBody>
        <BigButton $w={40} $ml={4}><BigIcon><NewFolderIcon /></BigIcon>New<br />folder</BigButton>
        <SmallColumn $w={38} $top={4} $left={5}>
          <SmallItem $gap={2}><NewItemIcon /><Caret /></SmallItem>
          <SmallItem $gap={2}><EasyAccess /><Caret /></SmallItem>
        </SmallColumn>
      </GroupBody>
      <GroupLabel>New</GroupLabel>
    </RibbonGroup>
    <RibbonGroup $w={99}>
      <GroupBody>
        <BigButton $w={58} $ml={3}>
          <BigIcon><CheckPage w={22} h={28} /></BigIcon>
          Properties
          <IconSlot $w={8}><svg width="5" height="9" viewBox="0 0 5 9"><path d="M0 5h5L2.500 8z" fill="#111" /></svg></IconSlot>
        </BigButton>
        <SmallColumn $w={24} $top={4} $left={4}>
          <SmallItem><OpenIcon /></SmallItem>
          <SmallItem><EditIcon /></SmallItem>
          <SmallItem><HistoryIcon /></SmallItem>
        </SmallColumn>
      </GroupBody>
      <GroupLabel>Open</GroupLabel>
    </RibbonGroup>
  </Ribbon>
);

const PackageView = () => (
  <PackageWindow>
    <WindowMiddle>
      <Wallpaper />
      <WindowBody>
        <TitleBar><Folder /><span>package</span></TitleBar>
        <TabStrip>
          <Tab $w={56} $kind="file">File</Tab>
          <Tab $w={58} $kind="active">Home</Tab>
          <Tab $w={59}>Share</Tab>
          <Tab $w={53}>View</Tab>
        </TabStrip>
        <RibbonView />
        <QuickBar>
          <CheckPage />
          <Folder />
          <svg width="8" height="8" viewBox="0 0 8 8"><path d="M.5 1h7M1.500 4h5L4 7z" fill="#111" stroke="#111" strokeWidth=".8" /></svg>
        </QuickBar>
        <AddressRow>
          <NavButtons>
            <NavArrow c="#d0d0d0" />
            <NavArrow c="#d0d0d0" flip />
            <Chevron w={7} h={5} d="M.8.8l2.700 2.700L6.200.8" c="#ccc" s={1.400} />
            <NavArrow c="#6c6c6c" up />
          </NavButtons>
          <AddressBox>
            <Folder /><Crumb /><Raised>package</Raised>
            <AddressTail>
              <Chevron w={9} h={7} d="M.8 1.200l3.700 4 3.700-4" c="#666" s={1.800} />
              <RefreshBox><Refresh /></RefreshBox>
            </AddressTail>
          </AddressBox>
          <SearchBox>Search package</SearchBox>
        </AddressRow>
        <Panes>
          <NavPane>
            <NavItem $root><Star /><Raised>Quick access</Raised></NavItem>
            {navItems.map((n) => (
              <NavItem key={n.label}>
                <IconSlot $w={16}>{n.icon}</IconSlot>
                <NavLabel $clip={n.pin}>{n.label}</NavLabel>
                {n.pin && <NavPin><PinShape /></NavPin>}
              </NavItem>
            ))}
            <NavItem><IconSlot $w={16}><Folder /></IconSlot></NavItem>
          </NavPane>
          <ScrollBar>
            <ScrollButton><ScrollUp /></ScrollButton>
            <ScrollThumb $h={212} />
          </ScrollBar>
          <FilePane>
            <HeaderRow $h={26}>
              <HeaderCell $w={272} $pad={18}>Name</HeaderCell>
              <HeaderCell $w={120} $pad={6} $line>Date modified</HeaderCell>
              <HeaderCell $w={80} $pad={6} $line>Type</HeaderCell>
              <SortMark $x={138} $y={0}><SortUp /></SortMark>
            </HeaderRow>
            <PackageRows>
              {packageFiles.map(([icon, name, date, type]) => (
                <PackageFile key={name}>
                  <IconSlot $w={16}>{icon}</IconSlot>
                  <Cell $w={236}>{name}</Cell>
                  <Cell $w={116} $kind="date">{date}</Cell>
                  <Cell $kind="type">{type}</Cell>
                </PackageFile>
              ))}
            </PackageRows>
          </FilePane>
        </Panes>
      </WindowBody>
    </WindowMiddle>
  </PackageWindow>
);

const CoreView = () => (
  <CoreWindow>
    <CoreInner>
      <CoreAddress><Raised>package</Raised><Crumb /><Raised>booking-core</Raised><Crumb /></CoreAddress>
      <CoreBody>
        <CoreGutter />
        <ScrollBar>
          <ScrollButton><ScrollUp /></ScrollButton>
          <ScrollThumb $h={344} />
        </ScrollBar>
        <CoreList>
          <HeaderRow $h={25}>
            <HeaderCell $w={272} $pad={18}>Name</HeaderCell>
            <HeaderCell $w={120} $pad={6} $line>Date modified</HeaderCell>
            <HeaderCell $w={121} $pad={6} $line>Type</HeaderCell>
            <SortMark $x={138} $y={0}><SortDown /></SortMark>
          </HeaderRow>
          <CoreRows>
            {coreFiles.map((f, i) =>
              f ? (
                <CoreRow key={f.name} $state={f.state}>
                  <IconSlot $w={16}>{f.icon}</IconSlot>
                  <Cell $w={240}>{f.name}</Cell>
                  <Cell $w={120} $kind="date">7/10/2019 5:28 PM</Cell>
                  <Cell $kind="type">{f.type}</Cell>
                </CoreRow>
              ) : (
                <SmearRow key={i} />
              )
            )}
          </CoreRows>
        </CoreList>
      </CoreBody>
    </CoreInner>
  </CoreWindow>
);

const ArchiveView = () => (
  <ArchiveWindow>
    <ArchiveAddress><Folder /><Crumb /><Raised>package</Raised><Crumb /><Raised>booking-core</Raised></ArchiveAddress>
    <ArchiveBody>
      <ArchiveEdge />
      <ArchiveList>
        <HeaderRow $h={27}>
          <HeaderCell $w={278} $pad={18}>Name</HeaderCell>
          <HeaderCell $w={122} $pad={6} $line>Date modified</HeaderCell>
          <HeaderCell $w={123} $pad={7} $line>Type</HeaderCell>
          <HeaderCell $w={70} $pad={6} $line>Size</HeaderCell>
          <SortMark $x={141} $y={1}><SortDown /></SortMark>
        </HeaderRow>
        <ArchiveRows>
          {archiveFiles.map(([icon, name, date, type, size]) => (
            <ArchiveRow key={name}>
              <IconSlot $w={16}>{icon}</IconSlot>
              <Cell $w={245}>{name}</Cell>
              <Cell $w={122} $kind="date">{date}</Cell>
              <Cell $w={122} $kind="type">{type}</Cell>
              <Cell $w={70} $kind="size">{size}</Cell>
            </ArchiveRow>
          ))}
        </ArchiveRows>
      </ArchiveList>
    </ArchiveBody>
  </ArchiveWindow>
);

const MenuView = () => (
  <Menu>
    {menuEntries.map((e, i) =>
      e === "line" ? (
        <MenuLine key={i} />
      ) : (
        <MenuItem key={e.label} $active={e.active} $bold={e.bold} $off={e.off}>
          <IconSlot $w={17}>{e.icon}</IconSlot>
          <span>{e.label}</span>
          {e.sub && <Chevron w={9} h={14} d="M1 1l7 6-7 6" c="#666" />}
        </MenuItem>
      )
    )}
  </Menu>
);

export default function App() {
  return (
    <>
      <GlobalStyle />
      <Desktop>
        <PackageView />
        <SideBar $x={619} $y={93} $h={164} />
        <SideBar $x={620} $y={257} $h={164} />
        <CoreView />
        <StrayColon>:</StrayColon>
        <BottomBar />
        <ArchiveView />
        <Leftover>.ed</Leftover>
        <MenuView />
        <RedFrame />

        <Note $x={359} $y={33} $w={330} $size={20.8}>Step 1: Unzip package in your PC</Note>
        <Note $x={730} $y={145} $w={570}>
          Step 3: Select all files and <b>do compression file one again<br />except .env + storage</b>
        </Note>
        <Note $x={18} $y={694} $w={260}>
          <p>Step 2: Rename or delete<br />2 files on Current<br />package.</p>
          <p>*Remember to backup 2<br />files on your hosting.</p>
        </Note>

        <ArrowLayer width="1465" height="934" viewBox="0 0 1465 934">
          <g stroke="#f8ac0a" fill="#f8ac0a" strokeLinecap="round">
            <path d="M566 80.500L409 265" strokeWidth="6.400" />
            <path d="M397.700 277.500L403.300 258.300 416.700 269.300z" stroke="none" />
            <path d="M948 200L961.500 261" strokeWidth="6.400" />
            <path d="M966 278.500L953.300 262.300 970.700 258.800z" stroke="none" />
          </g>
          <g stroke="#ff4343" fill="#ff4343" strokeLinecap="round">
            <path d="M272.300 719.300L335 704.500" strokeWidth="6.600" />
            <path d="M351.800 700.300L332.300 695.300 336.700 712.700z" stroke="none" />
            <path d="M267.700 728L336 757" strokeWidth="6.600" />
            <path d="M351.800 763.500L339.300 749 332 765.500z" stroke="none" />
          </g>
        </ArrowLayer>
      </Desktop>
    </>
  );
}
